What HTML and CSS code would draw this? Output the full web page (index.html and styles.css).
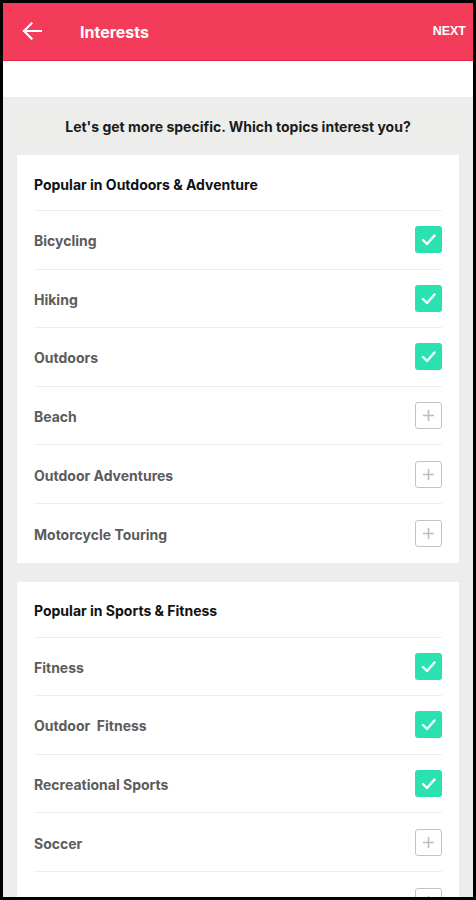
FILE: index.html
```html
<!DOCTYPE html>
<html>
<head>
<meta charset="utf-8">
<link rel="stylesheet" href="styles.css">
</head>
<body>
<div class="app">
  <header class="topbar">
    <svg class="back" width="20" height="18" viewBox="0 0 20 18"><path d="M19 9H2M9.5 1.5L2 9l7.5 7.5" fill="none" stroke="#fff" stroke-width="2.2" stroke-linecap="square"/></svg>
    <div class="title">Interests</div>
    <div class="next">NEXT</div>
  </header>
  <div class="whiteband"></div>
  <main class="content">
    <p class="prompt">Let's get more specific. Which topics interest you?</p>
    <section class="card">
      <h2 class="card-title">Popular in Outdoors &amp; Adventure</h2>
      <div class="row"><span>Bicycling</span><span class="box on"><svg width="27" height="27" viewBox="0 0 27 27"><path d="M8 14l4 4 7.5-8.5" fill="none" stroke="#fff" stroke-width="2.4" stroke-linecap="round" stroke-linejoin="round"/></svg></span></div>
      <div class="row"><span>Hiking</span><span class="box on"><svg width="27" height="27" viewBox="0 0 27 27"><path d="M8 14l4 4 7.5-8.5" fill="none" stroke="#fff" stroke-width="2.4" stroke-linecap="round" stroke-linejoin="round"/></svg></span></div>
      <div class="row"><span>Outdoors</span><span class="box on"><svg width="27" height="27" viewBox="0 0 27 27"><path d="M8 14l4 4 7.5-8.5" fill="none" stroke="#fff" stroke-width="2.4" stroke-linecap="round" stroke-linejoin="round"/></svg></span></div>
      <div class="row"><span>Beach</span><span class="box off"><svg width="25" height="25" viewBox="0 0 25 25"><path d="M12.5 7v11M7 12.5h11" stroke="#bdbdbd" stroke-width="1.6"/></svg></span></div>
      <div class="row"><span>Outdoor Adventures</span><span class="box off"><svg width="25" height="25" viewBox="0 0 25 25"><path d="M12.5 7v11M7 12.5h11" stroke="#bdbdbd" stroke-width="1.6"/></svg></span></div>
      <div class="row"><span>Motorcycle Touring</span><span class="box off"><svg width="25" height="25" viewBox="0 0 25 25"><path d="M12.5 7v11M7 12.5h11" stroke="#bdbdbd" stroke-width="1.6"/></svg></span></div>
    </section>
    <section class="card">
      <h2 class="card-title">Popular in Sports &amp; Fitness</h2>
      <div class="row"><span>Fitness</span><span class="box on"><svg width="27" height="27" viewBox="0 0 27 27"><path d="M8 14l4 4 7.5-8.5" fill="none" stroke="#fff" stroke-width="2.4" stroke-linecap="round" stroke-linejoin="round"/></svg></span></div>
      <div class="row"><span>Outdoor&nbsp; Fitness</span><span class="box on"><svg width="27" height="27" viewBox="0 0 27 27"><path d="M8 14l4 4 7.5-8.5" fill="none" stroke="#fff" stroke-width="2.4" stroke-linecap="round" stroke-linejoin="round"/></svg></span></div>
      <div class="row"><span>Recreational Sports</span><span class="box on"><svg width="27" height="27" viewBox="0 0 27 27"><path d="M8 14l4 4 7.5-8.5" fill="none" stroke="#fff" stroke-width="2.4" stroke-linecap="round" stroke-linejoin="round"/></svg></span></div>
      <div class="row"><span>Soccer</span><span class="box off"><svg width="25" height="25" viewBox="0 0 25 25"><path d="M12.5 7v11M7 12.5h11" stroke="#bdbdbd" stroke-width="1.6"/></svg></span></div>
      <div class="row"><span>Golf Tennis</span><span class="box off"><svg width="25" height="25" viewBox="0 0 25 25"><path d="M12.5 7v11M7 12.5h11" stroke="#bdbdbd" stroke-width="1.6"/></svg></span></div>
    </section>
  </main>
</div>
</body>
</html>
```
FILE: styles.css
```css
html, body {
  margin: 0;
  padding: 0;
  background: #000;
}
body {
  padding: 3px;
  box-sizing: border-box;
  height: 900px;
}
.app {
  width: 470px;
  height: 894px;
  overflow: hidden;
  background: #edeeec;
  font-family: Inter, "Liberation Sans", sans-serif;
}
.topbar {
  height: 57px;
  background: #f33b5a;
  border-bottom: 1px solid #e22a4a;
  display: flex;
  align-items: center;
  color: #fff;
}
.back {
  margin-left: 19px;
  margin-top: -2px;
}
.title {
  margin-left: 38px;
  font-size: 16px;
  font-weight: 700;
  margin-top: 1px;
}
.next {
  margin-left: auto;
  margin-right: 7px;
  font-size: 12.5px;
  font-weight: 800;
  font-family: "Liberation Sans", Arial, sans-serif;
  margin-top: -1px;
}
.whiteband {
  height: 36px;
  background: #fff;
}
.content {
  padding: 0 14px;
}
.prompt {
  margin: 0;
  height: 58px;
  display: flex;
  align-items: center;
  justify-content: center;
  font-size: 14px;
  font-weight: 700;
  color: #1b1b1b;
}
.card {
  background: #fff;
  padding: 0 17px;
  margin-bottom: 19px;
}
.card-title {
  margin: 0;
  height: 56px;
  box-sizing: border-box;
  padding-top: 3px;
  display: flex;
  align-items: center;
  font-size: 14px;
  font-weight: 700;
  color: #111;
  border-bottom: 1px solid #eeeeee;
}
.row {
  height: 58.6px;
  box-sizing: border-box;
  padding-top: 2px;
  display: flex;
  align-items: center;
  justify-content: space-between;
  border-bottom: 1px solid #eeeeee;
  font-size: 14px;
  font-weight: 650;
  color: #5c5c5c;
}
.row .box {
  margin-top: -2px;
}
.row:last-child {
  border-bottom: none;
}
.box {
  width: 27px;
  height: 27px;
  box-sizing: border-box;
  border-radius: 3px;
  display: flex;
  align-items: center;
  justify-content: center;
}
.box.on {
  background: #2ae2b0;
}
.box.off {
  border: 1px solid #c4c4c4;
}
```
